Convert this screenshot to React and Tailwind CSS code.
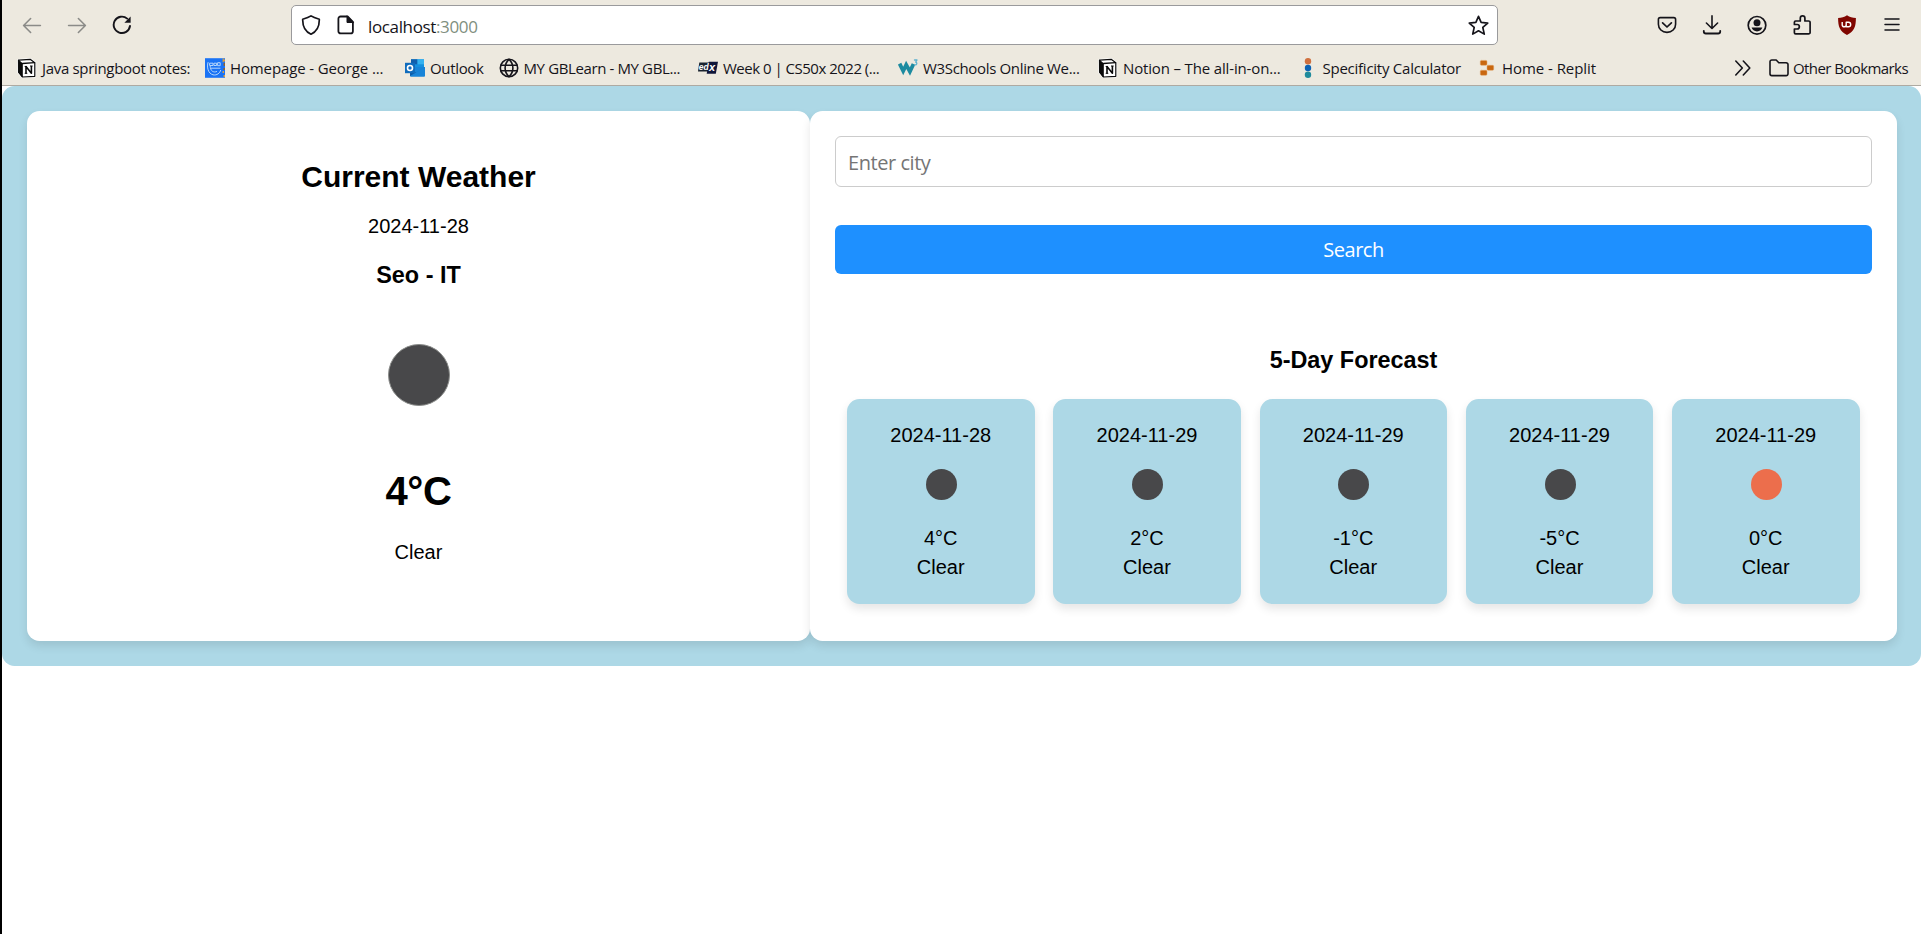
const forecast = [
  { date: '2024-11-28', temp: '4°C', text: 'Clear', dot: 'bg-[#48484a]' },
  { date: '2024-11-29', temp: '2°C', text: 'Clear', dot: 'bg-[#48484a]' },
  { date: '2024-11-29', temp: '-1°C', text: 'Clear', dot: 'bg-[#48484a]' },
  { date: '2024-11-29', temp: '-5°C', text: 'Clear', dot: 'bg-[#48484a]' },
  { date: '2024-11-29', temp: '0°C', text: 'Clear', dot: 'bg-[#ec6e4c]' },
];

function Icon({ children, className = 'size-5' }) {
  return (
    <svg viewBox="0 0 20 20" className={`shrink-0 ${className}`} fill="none" stroke="#15141a" strokeWidth="1.6" strokeLinecap="round" strokeLinejoin="round">
      {children}
    </svg>
  );
}

const BackIcon = () => (
  <Icon><path d="M18.400 10.500H1.600M8.600 3.500l-7 7 7 7" stroke="#8b8b88" /></Icon>
);
const ForwardIcon = () => (
  <Icon><path d="M1.600 10.500h16.800M11.400 3.500l7 7-7 7" stroke="#8b8b88" /></Icon>
);
const ReloadIcon = () => (
  <Icon>
    <path d="M15.2 3.6A8.2 8.2 0 1 0 18 11" strokeWidth="1.9" />
    <path d="M18.6 1.6v6.2h-6.2z" fill="#15141a" stroke="none" />
  </Icon>
);
const ShieldIcon = () => (
  <Icon><path d="M10 .9c2.400 1.700 5.300 2.500 8.300 3.300C18.500 11 16 16.500 10 19.200 4 16.500 1.500 11 1.700 4.200 4.700 3.400 7.600 2.600 10 .9z" strokeWidth="1.700" /></Icon>
);
const PageIcon = () => (
  <Icon>
    <path d="M4.600 1.500h7l5.300 5.300v9.400a2.200 2.200 0 0 1-2.200 2.200H4.600a2.200 2.200 0 0 1-2.200-2.200V3.700a2.200 2.200 0 0 1 2.200-2.200z" strokeWidth="1.800" />
    <path d="M11 1.200v6.300h6.200z" fill="#15141a" strokeWidth="1" />
  </Icon>
);
const StarIcon = () => (
  <Icon className="size-[21px]"><path d="m10 1.300 2.500 5.700 6.300.7-4.700 4.200 1.400 6.300L10 15.100l-5.500 3.100 1.400-6.300L1.200 7.700l6.300-.7z" strokeWidth="1.600" /></Icon>
);
const PocketIcon = () => (
  <Icon>
    <path d="M3.200 2.600h13.600a1.800 1.800 0 0 1 1.800 1.800v4.800c0 4.600-3.700 8.200-8.600 8.200S1.400 13.800 1.400 9.200V4.400a1.800 1.800 0 0 1 1.800-1.800z" />
    <path d="m5.600 7.800 4.400 4.200 4.400-4.200" strokeWidth="1.700" />
  </Icon>
);
const DownloadIcon = () => (
  <Icon>
    <path d="M10 .9v12.400M4.400 8l5.600 5.500L15.600 8" />
    <path d="M1.800 15.800v.8A2 2 0 0 0 3.800 18.500h12.400a2 2 0 0 0 2-1.900v-.8" strokeWidth="1.800" />
  </Icon>
);
const AccountIcon = () => (
  <Icon>
    <circle cx="10" cy="10.300" r="8.800" strokeWidth="1.700" />
    <circle cx="10" cy="7.800" r="3.500" fill="#15141a" stroke="none" />
    <path d="M4.600 12.600h10.800c-.7 2.300-2.600 3.900-5.400 3.900s-4.700-1.600-5.400-3.900z" fill="#15141a" stroke="none" />
  </Icon>
);
const PuzzleIcon = () => (
  <Icon>
    <path d="M3.600 18.900h13a1.500 1.500 0 0 0 1.500-1.500V7.500A1.500 1.500 0 0 0 16.600 6h-3.700V3.200a2.300 2.300 0 0 0-4.600 0V6H3.600a1.200 1.200 0 0 0-1.200 1.200v2.300h2.700a2.100 2.100 0 0 1 0 4.500H2.400v3.700a1.200 1.200 0 0 0 1.200 1.200z" strokeWidth="1.700" />
  </Icon>
);
const MenuIcon = () => (
  <Icon><path d="M3 4h14M3 9.500h14M3 15h14" strokeWidth="1.500" /></Icon>
);
const BlockerIcon = () => (
  <Icon>
    <path d="M10 .2c2.600 1.900 5.600 2.600 8.900 2.700 0 8.700-1.600 13-8.900 17C2.700 15.900 1.100 11.600 1.100 2.900 4.400 2.800 7.400 2.100 10 .2z" fill="#800600" stroke="none" />
    <path d="M5.200 7v2.700c0 2.800 4 2.800 4 0V7M9.200 12.300V7.300h2.300a2.200 2.200 0 1 1 0 4.400H9.200" stroke="#fff" strokeWidth="1.400" strokeLinecap="butt" />
  </Icon>
);
const NotionIcon = () => (
  <Icon>
    <path d="M1.200 1.800 13.300.9l5 3.500v14.200L5.200 19.300l-4.200-5z" fill="#fff" stroke="#fff" strokeWidth="1.600" />
    <path d="M1.700 2.200 13.200 1.300l4.600 3.400v13.600l-12.300.7-3.800-4.700z" fill="#fff" stroke="#0a0a0a" strokeWidth="1.200" />
    <path d="M1.700 2.200 5.400 5.500v13.400l-3.700-4.600z" fill="#0a0a0a" stroke="#0a0a0a" strokeWidth=".8" />
    <path d="M5.400 5.500 17.600 4.700" stroke="#0a0a0a" strokeWidth="1.300" />
    <path d="M9 15.400V8.500l5.400 6.700V7.900" stroke="#0a0a0a" strokeWidth="1.600" strokeLinecap="butt" />
    <path d="M7.700 8.500h2M7.700 15.300H10.300M13 8h2.600" stroke="#0a0a0a" strokeWidth="1" strokeLinecap="butt" />
  </Icon>
);
const CollegeIcon = () => (
  <Icon>
    <path d="M0 .2h20v19.600H0z" fill="#1a73f5" stroke="none" />
    <path d="M17.600.2h1v4h-1zM18.600 1.500H20v2h-1.400zM17.600 13h1.400v2h-1.400zM18.600 17H20v2h-1.400z" fill="#e0a03a" stroke="none" />
    <path d="M18.600 5H20v3h-1.400zM18.400 10H20v2h-1.600z" fill="#8a6232" stroke="none" />
    <path d="M3 4.500C1.600 9 3 15.500 8 16.800c4 .9 7-1.800 7.600-4.400M5.200 8.300c0 4.700 3.400 6.700 6.400 5.300M5 5.200h3v2.300H5zM9.300 5.200h2.300v2.300H9.300zM13 4.700h2.200v3H13zM6.400 10.200h8.600" stroke="#b5d6fb" strokeWidth="1" />
  </Icon>
);
const OutlookIcon = () => (
  <Icon>
    <path d="M6 1.300h13v9H6z" fill="#1490df" stroke="none" />
    <path d="M6 1.300h6.500v5H6z" fill="#0f5fad" stroke="none" />
    <path d="M12.500 1.300H19v5h-6.500z" fill="#35b2f0" stroke="none" />
    <path d="M5 9h15v8.800a1 1 0 0 1-1 1H6a1 1 0 0 1-1-1z" fill="#1784d8" stroke="none" />
    <path d="m20 9-9 5.500L5 10.500V18z" fill="#0d5ba6" stroke="none" />
    <path d="M0 4.800h10v10.400H0z" fill="#0f6cbd" stroke="none" />
    <circle cx="5" cy="10" r="2.500" stroke="#fff" strokeWidth="1.600" />
  </Icon>
);
const GlobeIcon = () => (
  <Icon>
    <circle cx="10" cy="10" r="8.700" />
    <path d="M1.800 7.200h16.400M1.800 12.800h16.400M10 1.300C4.800 6 4.800 14 10 18.700 15.200 14 15.200 6 10 1.300z" />
  </Icon>
);
const EdxIcon = () => (
  <Icon>
    <path d="M1.300 4.500h11l-1.600 9H0z" fill="#1b2430" stroke="none" />
    <path d="M10.800 3.800H20l-2.200 12H8.700z" fill="#10163a" stroke="none" />
    <text x="0.8" y="12" fill="#fff" stroke="none" className="font-['Liberation_Sans'] text-[8.500px] font-bold italic">ed</text>
    <text x="11" y="13.300" fill="#fff" stroke="none" className="font-['Liberation_Sans'] text-[11px] font-bold italic">x</text>
  </Icon>
);
const SchoolsIcon = () => (
  <Icon>
    <path d="M1.600 5.600 5.200 13l3-6.200 3.700 6.700 3.600-7.500" stroke="#1d8ba0" strokeWidth="3.800" strokeLinecap="butt" strokeLinejoin="miter" />
    <path d="M16.500 2h2.500l-1.300 2.200c1.800.4 1.400 3.200-1.200 2.600" stroke="#5fb3cf" strokeWidth="1.300" />
  </Icon>
);
const DotsIcon = () => (
  <Icon>
    <circle cx="10" cy="3.200" r="3.200" fill="#d0703f" stroke="none" />
    <circle cx="10" cy="10" r="3.200" fill="#0b62b4" stroke="none" />
    <circle cx="10" cy="16.800" r="3.200" fill="#1f8b9c" stroke="none" />
  </Icon>
);
const ReplitIcon = () => (
  <Icon>
    <g fill="#c9670f" stroke="#e3a566" strokeWidth="0.500">
      <rect x="3.300" y="2.400" width="6.700" height="4.900" rx="1.100" />
      <rect x="10" y="7.300" width="6.700" height="5" rx="1.100" />
      <rect x="3.300" y="12.300" width="6.700" height="5" rx="1.100" />
    </g>
  </Icon>
);
const FolderIcon = () => (
  <Icon><path d="M2.800 2h4.400l2.600 2.800h7.400a1.800 1.800 0 0 1 1.800 1.800v9.200a1.800 1.800 0 0 1-1.800 1.800H2.800A1.800 1.800 0 0 1 1 15.800v-12A1.800 1.800 0 0 1 2.800 2z" /></Icon>
);
const ChevronsIcon = () => (
  <Icon><path d="m2.800 3 6.500 7-6.500 7M10.300 3l6.500 7-6.500 7" strokeWidth="1.600" /></Icon>
);

const bookmarks = [
  { label: 'Java springboot notes:', icon: NotionIcon, box: 'w-[188px]', track: 'tracking-[-0.320px]' },
  { label: 'Homepage - George ...', icon: CollegeIcon, box: 'w-[200px]', track: 'tracking-[-0.120px]' },
  { label: 'Outlook', icon: OutlookIcon, box: 'w-[93.500px]', track: 'tracking-[-0.330px]' },
  { label: 'MY GBLearn - MY GBL...', icon: GlobeIcon, box: 'w-[199.500px]', track: 'tracking-[-0.380px]' },
  { label: 'Week 0 | CS50x 2022 (...', icon: EdxIcon, box: 'w-[200px]', track: 'tracking-[-0.500px]' },
  { label: 'W3Schools Online We...', icon: SchoolsIcon, box: 'w-[200px]', track: 'tracking-[-0.340px]' },
  { label: 'Notion – The all-in-on...', icon: NotionIcon, box: 'w-[199.500px]', track: 'tracking-[-0.150px]' },
  { label: 'Specificity Calculator', icon: DotsIcon, box: 'w-[179.500px]', track: 'tracking-[-0.250px]' },
  { label: 'Home - Replit', icon: ReplitIcon, box: 'w-[120px]', track: 'tracking-[-0.050px]' },
];

function ToolButton({ children }) {
  return <button className="flex h-10 w-[45px] items-center justify-center">{children}</button>;
}

function BrowserChrome() {
  return (
    <header className="flex h-[86px] flex-col border-b border-[#aeaaa2] bg-[#ede9df] font-['Open_Sans',sans-serif] text-[#15141a]">
      <div className="flex items-center pt-[5px] pr-[6.500px] pl-[7.500px]">
        <ToolButton><BackIcon /></ToolButton>
        <ToolButton><ForwardIcon /></ToolButton>
        <ToolButton><ReloadIcon /></ToolButton>
        <div className="ml-[146.500px] flex h-10 w-[1207px] items-center rounded-[5px] border border-[#9a9a9c] bg-white pr-[8px] pl-[9px]">
          <ShieldIcon />
          <span className="ml-[15px] flex"><PageIcon /></span>
          <span className="ml-[12px] flex-1 pt-[3px] text-[17px] leading-6 tracking-[-0.360px]">
            localhost<span className="text-[#7f8f80]">:3000</span>
          </span>
          <StarIcon />
        </div>
        <div className="ml-auto flex">
          <ToolButton><PocketIcon /></ToolButton>
          <ToolButton><DownloadIcon /></ToolButton>
          <ToolButton><AccountIcon /></ToolButton>
          <ToolButton><PuzzleIcon /></ToolButton>
          <ToolButton><BlockerIcon /></ToolButton>
          <ToolButton><MenuIcon /></ToolButton>
        </div>
      </div>
      <nav className="flex h-[40px] items-center pt-[6px] pl-[15px] text-[15px] whitespace-nowrap">
        {bookmarks.map(({ label, icon: BookmarkIcon, box, track }) => (
          <a key={label} className={`flex shrink-0 items-center gap-[5px] ${box}`}>
            <BookmarkIcon />
            <span className={track}>{label}</span>
          </a>
        ))}
        <div className="mr-[13px] ml-auto flex items-center">
          <ChevronsIcon />
          <span className="ml-[16px] flex"><FolderIcon /></span>
          <span className="ml-[4px] w-[115px] tracking-[-0.580px]">Other Bookmarks</span>
        </div>
      </nav>
    </header>
  );
}

function CurrentWeather() {
  return (
    <section className="flex w-[783px] flex-col items-center rounded-[12.500px] bg-white pt-[49px] shadow-[0_5px_10px_rgba(0,0,0,0.1)]">
      <h2 className="text-[30px] leading-[34px] font-bold">Current Weather</h2>
      <p className="mt-5 text-xl leading-6">2024-11-28</p>
      <h3 className="mt-[23px] text-[23.400px] leading-7 font-bold">Seo - IT</h3>
      <div className="mt-[55px] ml-px size-[62px] rounded-full border border-[#8b8d8b] bg-[#48484a]" />
      <h1 className="mt-[62px] text-[40px] leading-[46px] font-bold tracking-[-0.300px]">4°C</h1>
      <p className="mt-[26px] text-xl leading-6">Clear</p>
    </section>
  );
}

function ForecastCard({ date, temp, text, dot }) {
  return (
    <article className="flex h-[205px] flex-1 flex-col items-center rounded-[12.500px] bg-[#add8e6] pt-6 text-xl leading-6 shadow-[0_5px_10px_rgba(0,0,0,0.1)]">
      <p>{date}</p>
      <div className={`mt-[22px] ml-px size-[31px] rounded-full ${dot}`} />
      <p className="mt-[26px]">{temp}</p>
      <p className="mt-[5px]">{text}</p>
    </article>
  );
}

function SearchPanel() {
  return (
    <section className="flex flex-1 flex-col rounded-[12.500px] bg-white p-[25px] shadow-[0_5px_10px_rgba(0,0,0,0.1)]">
      <input
        placeholder="Enter city"
        className="h-[51px] rounded-[6px] border border-[#ccc] px-3 pt-[1px] font-['Open_Sans',sans-serif] text-[20px] tracking-[-0.450px] placeholder:text-[#757575]"
      />
      <button className="mt-[38px] h-[49px] rounded-[6px] bg-[#1e90ff] font-['Open_Sans',sans-serif] text-[20px] tracking-[-0.500px] text-white">
        Search
      </button>
      <h3 className="mt-[72px] text-center text-[23.400px] leading-7 font-bold">5-Day Forecast</h3>
      <div className="mt-[25px] flex gap-[18.750px] pr-[12.500px] pl-3">
        {forecast.map((day, i) => (
          <ForecastCard key={i} {...day} />
        ))}
      </div>
    </section>
  );
}

export default function App() {
  return (
    <div className="h-[934px] overflow-hidden border-l-2 border-black bg-white font-['Liberation_Sans',Arial,sans-serif] text-black">
      <BrowserChrome />
      <main className="flex h-[580px] rounded-[12.500px] bg-[#add8e6] py-[25px] pr-6 pl-[25px]">
        <CurrentWeather />
        <SearchPanel />
      </main>
    </div>
  );
}
